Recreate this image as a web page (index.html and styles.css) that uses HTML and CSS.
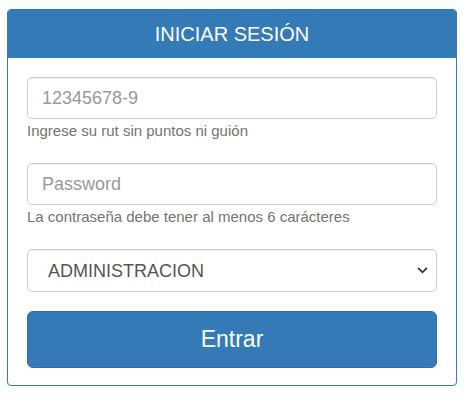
FILE: index.html
```html
<!DOCTYPE html>
<html lang="es">

<head>
    <meta charset="UTF-8">
    <title>Iniciar sesión</title>
    <link rel="stylesheet" href="styles.css">
</head>

<body>
    <div class="wrap">
        <div class="panel">
            <div class="panel-heading">INICIAR SESIÓN</div>
            <form class="panel-body" onsubmit="return false">
                <div class="form-group">
                    <input type="text" class="form-control" placeholder="12345678-9">
                    <span class="help-block">Ingrese su rut sin puntos ni guión</span>
                </div>
                <div class="form-group">
                    <input type="password" class="form-control" placeholder="Password">
                    <span class="help-block">La contraseña debe tener al menos 6 carácteres</span>
                </div>
                <div class="form-group">
                    <select class="form-control select">
                        <option>ADMINISTRACION</option>
                    </select>
                </div>
                <button type="submit" class="btn-entrar">Entrar</button>
            </form>
        </div>
    </div>
</body>

</html>
```

FILE: styles.css
```css
body {
    margin: 0;
    font-family: 'Liberation Sans', Arial, sans-serif;
    background-color: #fff;
    color: #333;
}

.wrap {
    padding: 9px 7px;
}

.panel {
    width: 450px;
    box-sizing: border-box;
    border: 1px solid #337ab7;
    border-radius: 4px;
    overflow: hidden;
}

.panel-heading {
    background-color: #337ab7;
    color: #fff;
    text-align: center;
    font-size: 20px;
    line-height: 28px;
    padding: 10px 0;
}

.panel-body {
    display: flex;
    flex-direction: column;
    padding: 19px 19px 17px 19px;
    margin: 0;
}

.form-group {
    margin-bottom: 22px;
}

.form-control {
    display: block;
    width: 100%;
    height: 42px;
    box-sizing: border-box;
    padding: 0 14px;
    font-family: inherit;
    font-size: 18px;
    color: #555;
    background-color: #fff;
    border: 1px solid #ccc;
    border-radius: 5px;
    box-shadow: inset 0 1px 1px rgba(0, 0, 0, 0.075);
    outline: none;
}

.form-control::placeholder {
    color: #999;
}

.select {
    height: 43px;
    padding-left: 20px;
    appearance: none;
    -webkit-appearance: none;
    background-image: url("data:image/svg+xml,%3Csvg xmlns='http://www.w3.org/2000/svg' width='12' height='8' viewBox='0 0 12 8'%3E%3Cpath d='M1.5 1.5 L6 6 L10.5 1.5' fill='none' stroke='%23333' stroke-width='2' stroke-linecap='round'/%3E%3C/svg%3E");
    background-repeat: no-repeat;
    background-position: right 8px center;
    background-size: 11px 7px;
}

.help-block {
    display: block;
    margin-top: 2px;
    font-size: 15px;
    line-height: 20px;
    color: #737373;
}

.form-group:nth-child(3) {
    margin-bottom: 19px;
}

.btn-entrar {
    height: 57px;
    width: 100%;
    background-color: #337ab7;
    color: #fff;
    border: 1px solid #2e6da4;
    border-radius: 6px;
    font-family: inherit;
    font-size: 23px;
    cursor: pointer;
}

.btn-entrar:hover {
    background-color: #286090;
}
```
